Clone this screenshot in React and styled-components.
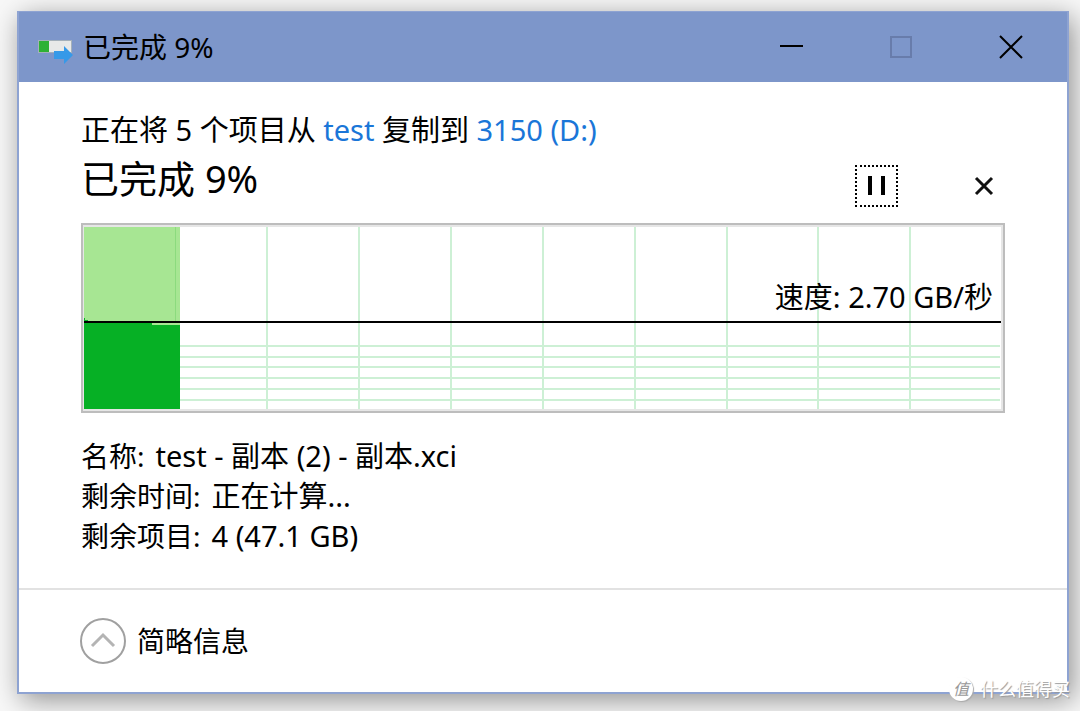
import { useId } from 'react';
import styled, { createGlobalStyle } from 'styled-components';

const GlobalStyle = createGlobalStyle`
  * {
    box-sizing: border-box;
  }

  body {
    margin: 0;
    background: #f8f8f8;
    color: #000;
    font-family: "Noto Sans", "Noto Sans CJK SC", sans-serif;
    font-size: 28px;
    line-height: 40px;
  }

  button {
    padding: 0;
    border: 0;
    background: none;
    color: inherit;
    font: inherit;
  }
`;

const Desktop = styled.div`
  position: relative;
  overflow: hidden;
  padding: 11px 11px 17px 17px;
`;

const Window = styled.main`
  border: 2px solid #8ea3d2;
  border-top-width: 1px;
  background: #fff;
  box-shadow: 4px 6px 26px rgba(0, 0, 0, 0.42);
`;

const TitleBar = styled.header`
  display: flex;
  align-items: center;
  height: 70px;
  padding: 0 1px 0 18px;
  background: #7d96ca;
`;

const Title = styled.h1`
  flex: 1;
  margin: 0 0 0 9px;
  font-size: 28px;
  font-weight: 400;
`;

const CaptionButton = styled.button`
  display: flex;
  align-items: center;
  justify-content: center;
  width: 110px;
  height: 70px;
  color: ${(p) => (p.disabled ? '#687cab' : '#000')};
`;

const Body = styled.section`
  padding: 28px 62px 32px;
`;

const Summary = styled.p`
  margin: 0;
  font-size: 29px;
`;

const Location = styled.a`
  color: #1a76d8;
  text-decoration: none;
`;

const ProgressRow = styled.div`
  display: flex;
  align-items: flex-start;
  height: 57px;
`;

const Progress = styled.h2`
  flex: 1;
  margin: 0;
  font-size: 38px;
  font-weight: 400;
  line-height: 56px;
`;

const Actions = styled.div`
  display: flex;
  gap: 64px;
  padding-top: 15px;
`;

const ActionButton = styled.button`
  display: flex;
  align-items: center;
  justify-content: center;
  width: 43px;
  height: 42px;
  border: 2px ${(p) => (p.$focused ? 'dotted #000' : 'solid transparent')};
`;

const ChartFrame = styled.figure`
  position: relative;
  height: 190px;
  margin: 16px 0 23px;
  border: 2px solid #bdbdbd;
  background: #e6e6e6;
  padding: 1px;

  svg {
    display: block;
    width: 100%;
    height: 100%;
    background: #fff;
  }
`;

const Speed = styled.figcaption`
  position: absolute;
  right: 10px;
  top: 52px;
  font-size: 29px;
`;

const Details = styled.dl`
  margin: 0;
`;

const Detail = styled.div`
  display: flex;
  gap: 11px;

  dt,
  dd {
    margin: 0;
  }

  dd {
    font-size: 29px;
  }
`;

const Footer = styled.footer`
  padding: 28px 61px;
  border-top: 2px solid #e2e2e2;
`;

const Toggle = styled.button`
  display: flex;
  align-items: center;
  gap: 11px;
`;

const Watermark = styled.div`
  position: absolute;
  right: 10px;
  bottom: 10px;
  display: flex;
  align-items: center;
  gap: 7px;
  color: #fff;
  font-size: 18px;
  line-height: 24px;
  text-shadow: 1px 1px 1px #999;
`;

const Badge = styled.span`
  display: flex;
  align-items: center;
  justify-content: center;
  width: 24px;
  height: 24px;
  border-radius: 50%;
  background: #fff;
  box-shadow: 1px 1px 1px #aaa;
  color: #999;
  font-size: 16px;
  font-style: italic;
  text-shadow: none;
`;

const columns = [183, 275, 367, 459, 551, 643, 734, 826];
const rows = [120, 131, 141, 152, 163, 174];

const details = [
  { label: '名称:', value: 'test - 副本 (2) - 副本.xci' },
  { label: '剩余时间:', value: '正在计算...' },
  { label: '剩余项目:', value: '4 (47.1 GB)' },
];

function CopyIcon() {
  return (
    <svg width="37" height="34" viewBox="0 0 37 34" aria-hidden="true">
      <rect x="1" y="10" width="34" height="13" fill="#a4b0ba" />
      <rect x="2" y="11" width="10" height="11" fill="#2eb135" />
      <rect x="12" y="11" width="22" height="11" fill="#e8e9e8" />
      <path d="M17 21h10v-5l9 9-9 9v-5H17z" fill="#3699e8" />
    </svg>
  );
}

function SpeedChart() {
  return (
    <svg viewBox="0 0 918 184" preserveAspectRatio="none" shapeRendering="crispEdges" aria-hidden="true">
      {columns.map((x) => (
        <rect key={x} x={x - 1} y="0" width="2" height="184" fill="#cdf0d5" />
      ))}
      {rows.map((y) => (
        <rect key={y} x="96" y={y - 1} width="820" height="2" fill="#cdf0d5" />
      ))}
      <path d="M0 0h918v184H0z" fill="none" stroke="#e6e6e6" strokeWidth="2" />
      <rect x="0" y="1" width="96" height="99" fill="#a7e693" />
      <rect x="91" y="1" width="1" height="95" fill="#8cdb7e" />
      <path d="M0 92h1v2h3v3h64v2h28v84H0z" fill="#06b025" />
      <rect x="0" y="95" width="917" height="2" fill="#000" />
    </svg>
  );
}

export default function App() {
  const titleId = useId();

  return (
    <>
      <GlobalStyle />
      <Desktop>
        <Window aria-labelledby={titleId}>
          <TitleBar>
            <CopyIcon />
            <Title id={titleId}>已完成 9%</Title>
            <CaptionButton aria-label="最小化">
              <svg width="24" height="24" viewBox="0 0 24 24">
                <path d="M1 11h23" stroke="currentColor" strokeWidth="2" />
              </svg>
            </CaptionButton>
            <CaptionButton aria-label="最大化" disabled>
              <svg width="24" height="24" viewBox="0 0 24 24">
                <path d="M2 2h20v20H2z" fill="none" stroke="currentColor" strokeWidth="2" />
              </svg>
            </CaptionButton>
            <CaptionButton aria-label="关闭">
              <svg width="24" height="24" viewBox="0 0 24 24">
                <path d="M1 1l22 22M23 1L1 23" stroke="currentColor" strokeWidth="2" />
              </svg>
            </CaptionButton>
          </TitleBar>

          <Body>
            <Summary>
              正在将 5 个项目从 <Location href="#test">test</Location> 复制到{' '}
              <Location href="#3150">3150 (D:)</Location>
            </Summary>
            <ProgressRow>
              <Progress>已完成 9%</Progress>
              <Actions>
                <ActionButton aria-label="暂停" $focused>
                  <svg width="18" height="20" viewBox="0 0 18 20">
                    <path d="M0 0h4v19H0zM13 0h4v19h-4z" />
                  </svg>
                </ActionButton>
                <ActionButton aria-label="取消">
                  <svg width="20" height="20" viewBox="0 0 20 20">
                    <path d="M2 2l16 16M18 2L2 18" stroke="#111" strokeWidth="3" />
                  </svg>
                </ActionButton>
              </Actions>
            </ProgressRow>

            <ChartFrame>
              <SpeedChart />
              <Speed>速度: 2.70 GB/秒</Speed>
            </ChartFrame>

            <Details>
              {details.map((item) => (
                <Detail key={item.label}>
                  <dt>{item.label}</dt>
                  <dd>{item.value}</dd>
                </Detail>
              ))}
            </Details>
          </Body>

          <Footer>
            <Toggle aria-expanded="true">
              <svg width="46" height="46" viewBox="0 0 46 46" fill="none" aria-hidden="true">
                <circle cx="23" cy="23" r="22" stroke="#a0a0a0" strokeWidth="2" />
                <path d="M12 28l11-11 11 11" stroke="#b4b4b4" strokeWidth="3" />
              </svg>
              简略信息
            </Toggle>
          </Footer>
        </Window>

        <Watermark>
          <Badge>值</Badge>
          什么值得买
        </Watermark>
      </Desktop>
    </>
  );
}
